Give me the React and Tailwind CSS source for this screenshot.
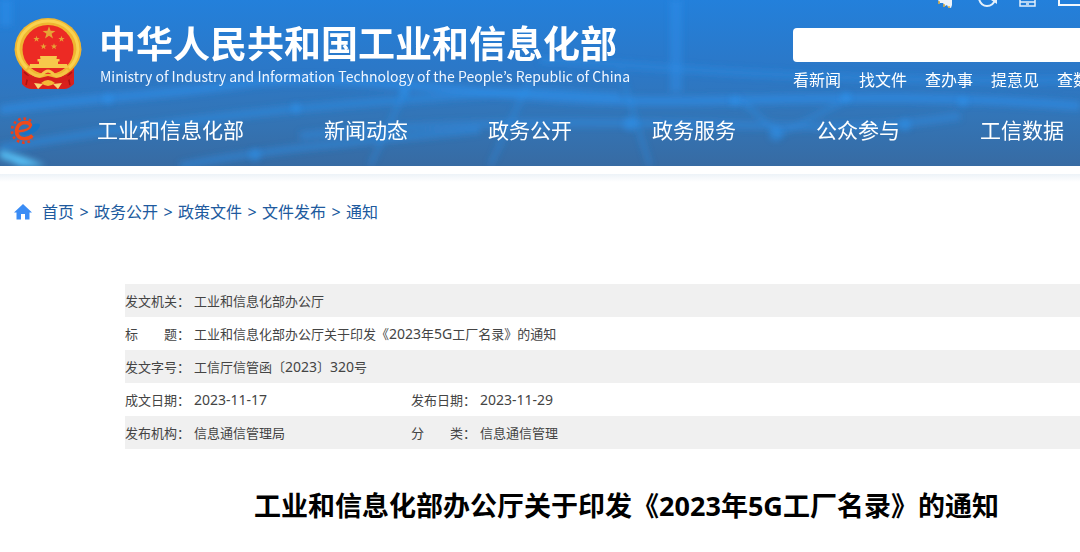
import React from 'react';

const navItems = ['工业和信息化部', '新闻动态', '政务公开', '政务服务', '公众参与', '工信数据'];

const quickLinks = ['看新闻', '找文件', '查办事', '提意见', '查数据'];

const crumbs = ['首页', '政务公开', '政策文件', '文件发布', '通知'];

const infoRows = [
  [{ label: '发文机关：', value: '工业和信息化部办公厅' }],
  [{ label: '标　　题：', value: '工业和信息化部办公厅关于印发《2023年5G工厂名录》的通知' }],
  [{ label: '发文字号：', value: '工信厅信管函〔2023〕320号' }],
  [
    { label: '成文日期：', value: '2023-11-17' },
    { label: '发布日期：', value: '2023-11-29' }
  ],
  [
    { label: '发布机构：', value: '信息通信管理局' },
    { label: '分　　类：', value: '信息通信管理' }
  ]
];

const STAR = 'M0 -1 L.24 -.32 L.95 -.31 L.38 .12 L.59 .81 L0 .4 L-.59 .81 L-.38 .12 L-.95 -.31 L-.24 -.32Z';

function HeaderBackdrop() {
  return (
    <svg
      className="absolute inset-0 h-full w-full"
      viewBox="0 0 1080 166"
      preserveAspectRatio="none"
      aria-hidden="true"
    >
      <defs>
        <linearGradient id="sky" x1="0" y1="0" x2="0" y2="1">
          <stop offset="0" stopColor="#2380db" />
          <stop offset="0.4" stopColor="#2b78c8" />
          <stop offset="0.7" stopColor="#3375b7" />
          <stop offset="1" stopColor="#376ba3" />
        </linearGradient>
        <filter id="soft" filterUnits="userSpaceOnUse" x="-20" y="-20" width="1120" height="206">
          <feGaussianBlur stdDeviation="3" />
        </filter>
      </defs>
      <rect width="1080" height="166" fill="url(#sky)" />
      <g fill="none" stroke="#2d92ee" filter="url(#soft)">
        <path d="M0 110 C80 98 160 96 240 84 S420 88 560 98 S860 88 1080 106" strokeWidth="9" opacity="0.55" />
        <path d="M0 148 C120 128 240 112 400 100 S520 92 620 96" strokeWidth="8" opacity="0.45" />
        <path d="M300 136 C440 120 600 122 700 124 S860 132 960 116" strokeWidth="8" opacity="0.4" />
        <path d="M180 166 C260 150 340 144 480 130" strokeWidth="7" opacity="0.45" />
        <path d="M540 60 C620 62 800 84 1080 80" strokeWidth="8" opacity="0.35" />
        <path d="M410 80 L370 166 M530 80 L490 166 M620 70 L650 166 M780 134 L740 100 M780 134 L850 98" strokeWidth="5" opacity="0.35" />
        <path d="M676 0 V92" strokeWidth="12" opacity="0.4" />
        <path d="M6 0 V26" strokeWidth="12" opacity="0.5" />
      </g>
      <g fill="#2f98f5" filter="url(#soft)" opacity="0.45">
        <circle cx="108" cy="99" r="5" />
        <circle cx="296" cy="108" r="5" />
        <circle cx="404" cy="92" r="5" />
        <circle cx="630" cy="124" r="7" />
        <circle cx="735" cy="101" r="5" />
        <circle cx="776" cy="134" r="7" />
        <circle cx="846" cy="97" r="5" />
        <circle cx="905" cy="125" r="6" />
        <circle cx="963" cy="102" r="5" />
        <circle cx="255" cy="155" r="6" />
      </g>
      <path d="M0 150 Q24 156 46 166 L20 166 Q10 160 0 158Z" fill="#56c0f5" filter="url(#soft)" />
    </svg>
  );
}

function Emblem() {
  return (
    <svg className="h-[71px] w-[68px] shrink-0" viewBox="0 0 68 71" aria-hidden="true">
      <path d="M8 46 L60 46 L60 66 Q55 71 50 71 L18 71 Q12 71 8 66Z" fill="#d9211d" />
      <path d="M10 54 L14 58 L12 67 M58 54 L54 58 L56 67" stroke="#a81212" strokeWidth="1.500" fill="none" />
      <path
        d="M34 0 A33.500 31.500 0 0 1 67.500 31.500 Q67 43 58 52 Q48 61 34 61 Q20 61 10 52 Q1 43 .5 31.500 A33.500 31.500 0 0 1 34 0Z"
        fill="#efb631"
      />
      <path
        d="M34 3 A30 28.500 0 0 1 64 31.500 Q63 43 55 50 M34 3 A30 28.500 0 0 0 4 31.500 Q5 43 13 50"
        fill="none"
        stroke="#f9d24f"
        strokeWidth="3"
      />
      <ellipse cx="34" cy="31.500" rx="25.500" ry="24.500" fill="#ec2a24" />
      <g fill="#e6a436">
        <path d={STAR} transform="translate(35 15) scale(6.800)" />
        <path d={STAR} transform="translate(22.500 21) scale(3.300)" />
        <path d={STAR} transform="translate(47.500 21) scale(3.300)" />
        <path d={STAR} transform="translate(29.500 28.500) scale(3.300)" />
        <path d={STAR} transform="translate(40 28.500) scale(3.300)" />
      </g>
      <path d="M26 38 H43 L42.500 41 H45.500 V43.500 H44 V46 H53 L54 50 H15 L16 46 H25 V43.500 H23.500 V41 H26.500Z" fill="#f7c84b" />
      <path d="M17 50 H51 Q46 54 41 55 Q38 52 34 52 Q30 52 27 55 Q22 54 17 50Z" fill="#e42620" />
      <path d="M9 55 Q17 61 26 60 L34 58 L42 60 Q51 61 59 55 V59 Q50 66 34 66 Q18 66 9 59Z" fill="#d51f1c" />
      <path d="M14 52 Q22 60 28 57 Q31 53 34 53 Q37 53 40 57 Q46 60 54 52" fill="none" stroke="#f5c445" strokeWidth="3" />
      <path d="M20 65 L29 66 L24 71Z M48 65 L39 66 L44 71Z" fill="#f9d573" />
      <path d="M27 65 Q34 59 41 65 Q34 71 27 65Z" fill="#f3b936" />
    </svg>
  );
}

function GearLogo() {
  return (
    <svg className="h-7 w-[31px] shrink-0" viewBox="0 0 31 28" fill="none" aria-hidden="true">
      <path d="M21 4 A12 12 0 1 0 22.500 22" stroke="#e8401f" strokeWidth="2.600" strokeDasharray="2.600 2.800" />
      <path d="M22 8 Q30 5 30 8.500 Q28 15 20 17 Q14 18.500 11 17 Q19 15 22 8Z" fill="#1674c6" />
      <path
        d="M22.500 18.500 Q19 22 14 21.800 Q6.500 21 6.500 14 Q7.500 6 15 5.500 Q20.500 5.500 20.500 9"
        stroke="#f04a1a"
        strokeWidth="3.600"
      />
      <path d="M21 8 Q20 13.500 8 14.500" stroke="#f04a1a" strokeWidth="2.400" />
    </svg>
  );
}

function TopTools() {
  return (
    <svg className="block h-2 w-[287px]" viewBox="0 0 287 8" fill="none" aria-hidden="true">
      <path d="M145 0 H159 L159 5 L158 8 L155 7 L154 5 L152 6 L150 3 L147 3Z" fill="#eef4fa" />
      <path d="M146 1 V4 M151 4 V7 M156 6 V8" stroke="#e8b13c" strokeWidth="1.500" />
      <path d="M186 -1 Q188 6 194 6 Q200 6 202 0" stroke="#e4f0fb" strokeWidth="2" />
      <path d="M198 0 L204 4 L204 -2Z" fill="#e4f0fb" />
      <path d="M227 -4 V6 H242 V-4 M227 2 H242" stroke="#e4f0fb" strokeWidth="1.500" />
      <path d="M233 4 H236" stroke="#e4f0fb" strokeWidth="1.500" />
      <path d="M266 -4 V5 H290" stroke="#f2f8fd" strokeWidth="2" />
    </svg>
  );
}

// Digits and latin letters sit one size up next to the small Chinese text
function MixedText({ text }) {
  return text.split(/([0-9A-Z-]+)/).map((part, index) =>
    index % 2 === 1 ? (
      <span key={index} className="text-sm">{part}</span>
    ) : (
      part
    )
  );
}

function Header() {
  return (
    <header className="relative overflow-hidden text-white">
      <HeaderBackdrop />
      <div className="relative">
        <div className="grid h-24 grid-cols-[minmax(0,1fr)_287px]">
          <a href="#home" className="flex items-start pt-[18px] pl-3.5 whitespace-nowrap">
            <Emblem />
            <span className="ml-[17px] block pt-1">
              <span className="block text-[37px] leading-[44px] font-bold">中华人民共和国工业和信息化部</span>
              <span className="block pl-px font-['Noto_Sans_CJK_KR',sans-serif] text-sm leading-5 text-blue-50" lang="en">
                Ministry of Industry and Information Technology of the People’s Republic of China
              </span>
            </span>
          </a>
          <div className="overflow-hidden">
            <TopTools />
            <input
              type="search"
              aria-label="搜索"
              className="mt-5 block h-[34px] w-full rounded-l-sm bg-white px-3 text-base text-gray-800 outline-none"
            />
            <div className="mt-1.5 flex gap-[18px] leading-6 whitespace-nowrap">
              {quickLinks.map((link) => (
                <a key={link} href="#search" className="hover:underline">{link}</a>
              ))}
            </div>
          </div>
        </div>

        <nav className="flex h-[70px] items-center pl-2.5 text-[21px] whitespace-nowrap">
          <GearLogo />
          <div className="ml-14 flex gap-20">
            {navItems.map((item) => (
              <a key={item} href="#nav" className="hover:underline">{item}</a>
            ))}
          </div>
        </nav>
      </div>
    </header>
  );
}

function Breadcrumb() {
  return (
    <nav aria-label="breadcrumb" className="flex items-center pl-3.5 leading-6 text-[#205a9e]">
      <svg className="mr-2.5 h-4 w-[18px]" viewBox="0 0 18 16" fill="#3a8cf5" aria-hidden="true">
        <path d="M9 0 L18 8.500 H15.500 V15.500 H11 V10 H7 V15.500 H2.500 V8.500 H0Z" />
      </svg>
      {crumbs.map((crumb, index) => (
        <React.Fragment key={crumb}>
          {index > 0 && <span className="w-5 text-center">&gt;</span>}
          <a href="#crumb" className="hover:underline">{crumb}</a>
        </React.Fragment>
      ))}
    </nav>
  );
}

function InfoTable() {
  return (
    <table className="w-full table-fixed border-collapse text-[13px] leading-5 text-[#444444]">
      <colgroup>
        <col className="w-[69px]" />
        <col className="w-[217px]" />
        <col className="w-[69px]" />
        <col />
      </colgroup>
      <tbody>
        {infoRows.map((row) => (
          <tr key={row[0].label} className="h-[33px] odd:bg-[#f0f0f0]">
            {row.map((cell) => (
              <React.Fragment key={cell.label}>
                <th scope="row" className="p-0 text-left font-normal whitespace-pre">{cell.label}</th>
                <td className="p-0" colSpan={row.length === 1 ? 3 : 1}>
                  <MixedText text={cell.value} />
                </td>
              </React.Fragment>
            ))}
          </tr>
        ))}
      </tbody>
    </table>
  );
}

export default function App() {
  return (
    <div className="min-h-screen overflow-x-hidden bg-white font-['Noto_Sans','Noto_Sans_CJK_SC',sans-serif]" lang="zh-CN">
      <Header />
      <div className="mt-2 h-2 bg-linear-to-b from-[#edf3f8] to-white" />
      <main>
        <div className="pt-[18px]">
          <Breadcrumb />
        </div>
        <div className="mt-[60px] pl-[125px]">
          <InfoTable />
          <h1 className="mt-[37px] pl-12 text-center text-[27px] leading-10 font-bold whitespace-nowrap text-black">
            工业和信息化部办公厅关于印发《2023年5G工厂名录》的通知
          </h1>
        </div>
      </main>
    </div>
  );
}
